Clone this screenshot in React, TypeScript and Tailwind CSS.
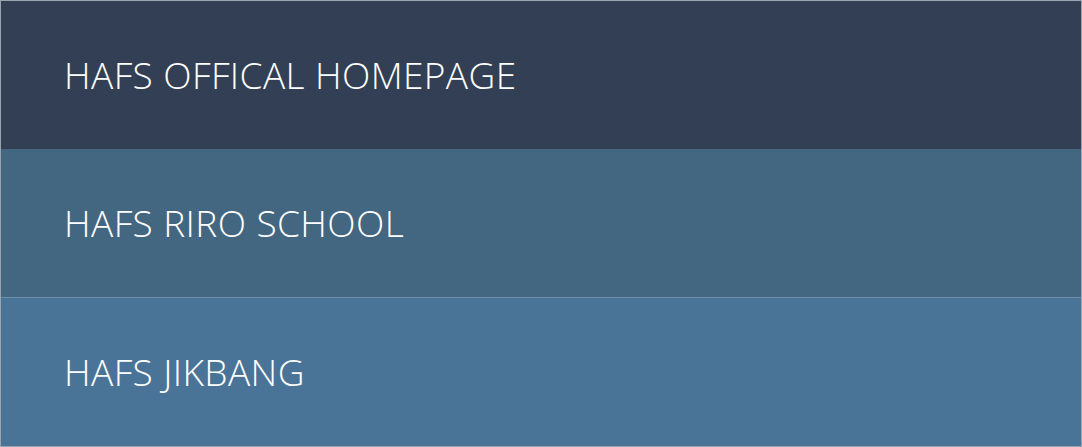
export default function App() {
  const links = [
    { label: "HAFS OFFICAL HOMEPAGE", bg: "bg-[#323f54]" },
    { label: "HAFS RIRO SCHOOL", bg: "bg-[#436681]" },
    { label: "HAFS JIKBANG", bg: "bg-[#4a7497] border-t border-[#6f90ac]" },
  ]

  return (
    <div className="w-[1082px] h-[447px] border border-[#9aa4ae] flex flex-col font-['Open_Sans',sans-serif]">
      {links.map((l) => (
        <a
          key={l.label}
          href="#"
          className={`flex-1 flex items-center pl-[63px] text-white text-[37px] font-[350] tracking-[0.4px] ${l.bg}`}
        >
          {l.label}
        </a>
      ))}
    </div>
  )
}
